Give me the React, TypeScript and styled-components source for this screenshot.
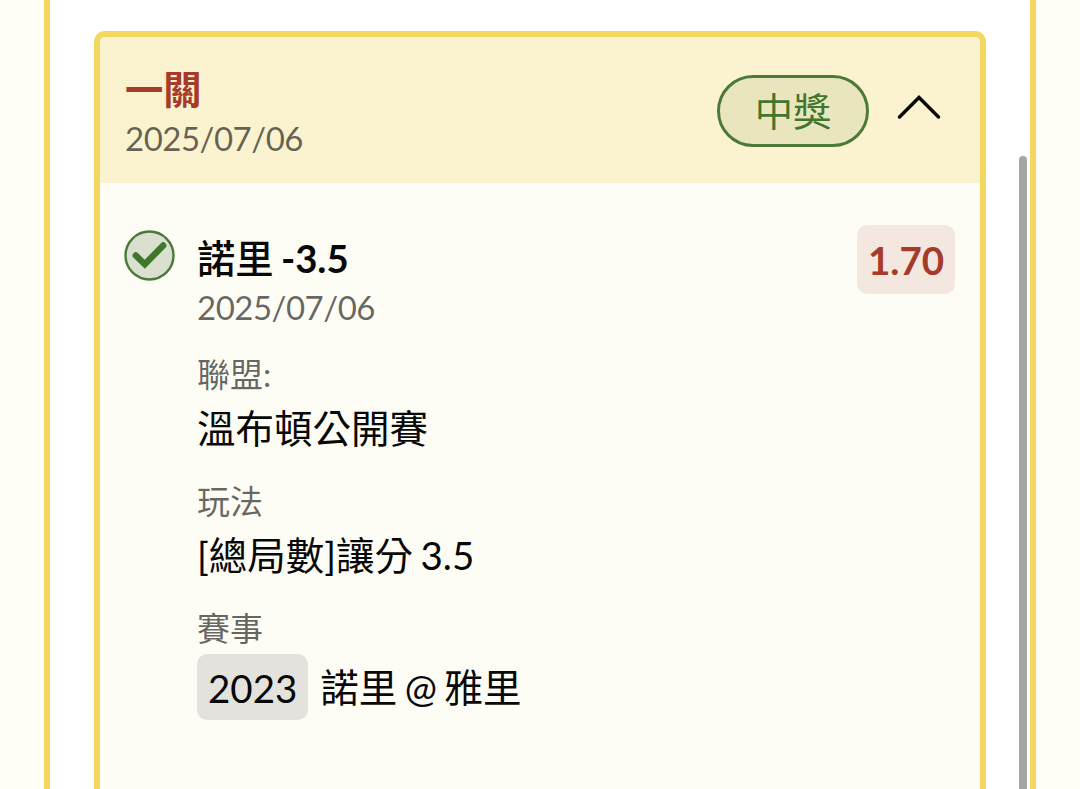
import styled, { createGlobalStyle } from "styled-components";

const details = [
  { label: "聯盟:", value: "溫布頓公開賽" },
  { label: "玩法", value: "[總局數]讓分 3.5" },
  { label: "賽事", value: "諾里 @ 雅里", code: "2023" },
];

const App = () => {
  return (
    <Page>
      <GlobalStyle />
      <Panel>
        <Ticket>
          <TicketHeader>
            <div>
              <TicketTitle>一關</TicketTitle>
              <DateText>2025/07/06</DateText>
            </div>
            <HeaderRight>
              <StatusBadge>中獎</StatusBadge>
              <ToggleBtn aria-label="toggle">
                <svg width="46" height="28" viewBox="0 0 46 28" fill="none">
                  <path
                    d="M3.5 24 L23 4.5 L42.5 24"
                    stroke="#080703"
                    strokeWidth="3.4"
                    strokeLinecap="round"
                  />
                </svg>
              </ToggleBtn>
            </HeaderRight>
          </TicketHeader>
          <Bet>
            <ResultIcon width="52" height="52" viewBox="0 0 52 52" fill="none">
              <circle cx="25.5" cy="25.5" r="24" fill="#d9e0cf" stroke="#4b7a38" strokeWidth="2.4" />
              <path
                d="M11.8 25.5 L20.8 34.2 L39.2 15.5"
                stroke="#42762c"
                strokeWidth="6.4"
                strokeLinecap="round"
              />
            </ResultIcon>
            <BetBody>
              <BetTitle>
                諾里 <Spread>-3.5</Spread>
              </BetTitle>
              <DateText>2025/07/06</DateText>
              {details.map(({ label, value, code }) => (
                <Detail key={label}>
                  <Label>{label}</Label>
                  <Value $tagged={!!code}>
                    {code && <Code>{code}</Code>}
                    {value}
                  </Value>
                </Detail>
              ))}
            </BetBody>
            <Odds>1.70</Odds>
          </Bet>
        </Ticket>
        <ScrollThumb />
      </Panel>
    </Page>
  );
};

export default App;

const GlobalStyle = createGlobalStyle`
  * {
    box-sizing: border-box;
  }

  body {
    margin: 0;
    overflow: hidden;
    font-family: Lato, "Noto Sans CJK TC", sans-serif;
    word-spacing: -2.4px;
    color: #080808;
  }
`;

const Page = styled.div`
  height: 100vh;
  padding: 0 44px;
  overflow: hidden;
  background-color: #fefdf6;
`;

const Panel = styled.div`
  position: relative;
  height: 100%;
  padding: 31px 44px 0;
  border: solid #f3d75e;
  border-width: 0 6px;
  background-color: white;
`;

const Ticket = styled.div`
  height: 800px;
  border: 6px solid #f3d75e;
  border-radius: 11px;
  background-color: #fefdf5;
  overflow: hidden;
`;

const TicketHeader = styled.div`
  height: 146px;
  padding: 3px 38px 0 25px;
  display: flex;
  justify-content: space-between;
  align-items: center;
  background-color: #fbf2cf;
`;

const TicketTitle = styled.div`
  font-size: 38.3px;
  font-weight: bold;
  line-height: 52px;
  color: #a63a2b;
`;

const DateText = styled.div`
  font-size: 33px;
  line-height: 46px;
  letter-spacing: -0.5px;
  color: rgba(0, 0, 0, 0.6);
`;

const HeaderRight = styled.div`
  display: flex;
  align-items: center;
  gap: 27px;
  margin-bottom: 2px;
`;

const StatusBadge = styled.span`
  width: 152px;
  height: 72px;
  border: 3px solid #4b7a38;
  border-radius: 36px;
  background-color: #e9e6bf;
  font-size: 38.3px;
  line-height: 66px;
  text-align: center;
  color: #42762c;
`;

const ToggleBtn = styled.button`
  display: flex;
  padding: 0 0 8px;
  border: none;
  background: none;
`;

const Bet = styled.div`
  padding: 42px 25px 0 24px;
  display: flex;
  align-items: flex-start;
`;

const ResultIcon = styled.svg`
  flex-shrink: 0;
  margin: 5px 21px 0 0;
`;

const BetBody = styled.div`
  flex: 1;
  padding-top: 7px;
`;

const BetTitle = styled.div`
  font-size: 38.3px;
  font-weight: 500;
  line-height: 52px;
`;

const Spread = styled.span`
  font-weight: bold;
`;

const Detail = styled.div`
  height: 127px;
  padding-top: 20px;
`;

const Label = styled.div`
  font-size: 33px;
  line-height: 48px;
  color: rgba(0, 0, 0, 0.6);
`;

const Value = styled.div<{ $tagged: boolean }>`
  display: flex;
  align-items: center;
  gap: 12px;
  height: ${({ $tagged }) => ($tagged ? "70px" : "59px")};
  font-size: 38.5px;
  line-height: 58px;
`;

const Code = styled.span`
  height: 66px;
  padding: 0 11px;
  border-radius: 10px;
  background-color: #e3e2dc;
  line-height: 68px;
`;

const Odds = styled.div`
  width: 98px;
  height: 69px;
  border-radius: 10px;
  background-color: #f4e7e0;
  font-size: 38.5px;
  font-weight: bold;
  line-height: 71px;
  text-align: center;
  color: #a63a2b;
`;

const ScrollThumb = styled.div`
  position: absolute;
  top: 156px;
  right: 3px;
  width: 8px;
  height: 700px;
  border-radius: 4px;
  background-color: #a5a5a5;
`;
